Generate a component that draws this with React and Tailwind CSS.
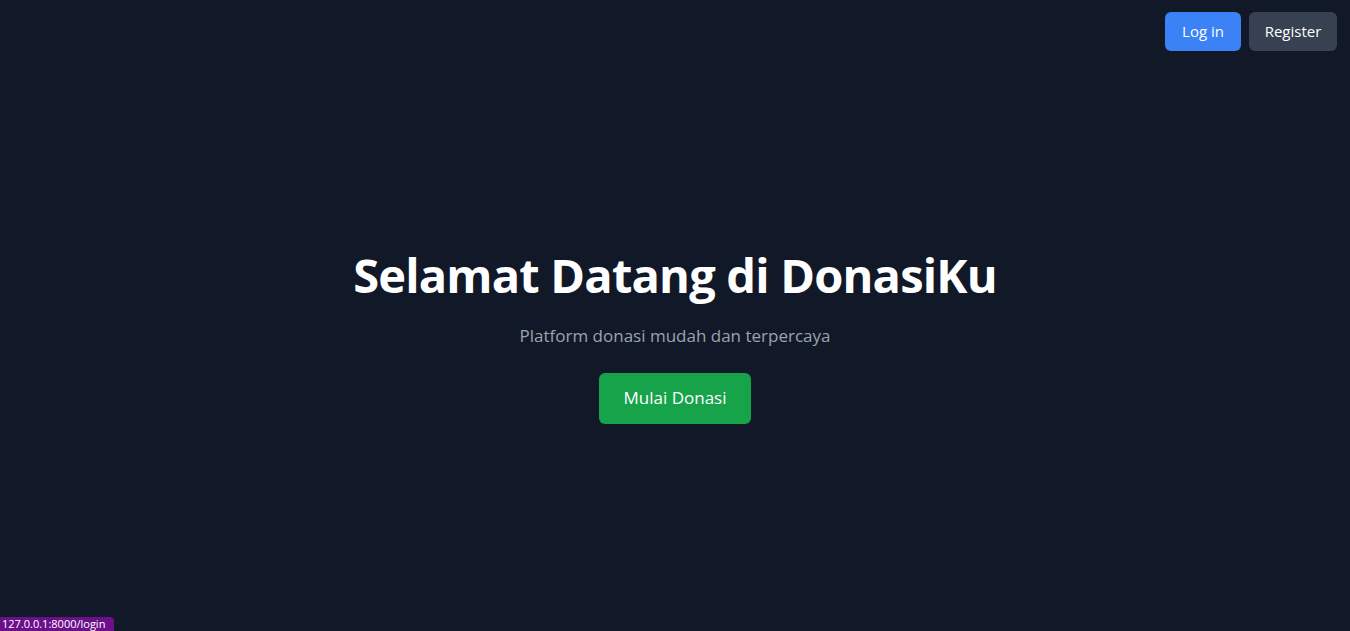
export default function App() {
  return (
    <div
      className="relative min-h-screen h-[631px] bg-[#111827] text-white overflow-hidden"
      style={{ fontFamily: '"Open Sans", "Noto Sans", sans-serif' }}
    >
      <header className="flex justify-end gap-2 pt-3 pr-[13px]">
        <button className="h-[39px] w-[76px] rounded-md bg-[#3b82f6] text-white text-[15px]">
          Log in
        </button>
        <button className="h-[39px] w-[88px] rounded-md bg-[#374151] text-white text-[15px]">
          Register
        </button>
      </header>

      <main className="flex flex-col items-center pt-[196px]">
        <h1 className="text-[47px] leading-[56px] font-bold tracking-[-0.8px]">
          Selamat Datang di DonasiKu
        </h1>
        <p className="mt-[20px] text-[17px] text-[#9ca3af]">
          Platform donasi mudah dan terpercaya
        </p>
        <button className="mt-[24px] w-[152px] h-[51px] rounded-md bg-[#16a34a] text-white text-[17px]">
          Mulai Donasi
        </button>
      </main>

      <div className="absolute left-0 bottom-0 h-[14px] w-[114px] pl-[2px] bg-[#6b0f8a] rounded-tr text-[11px] leading-[14px] text-white whitespace-nowrap">
        127.0.0.1:8000/login
      </div>
    </div>
  );
}
